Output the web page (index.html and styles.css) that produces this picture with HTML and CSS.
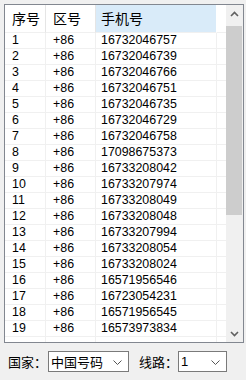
FILE: index.html
```html
<!DOCTYPE html>
<html lang="zh">
<head>
  <meta charset="UTF-8">
  <title>号码列表</title>
  <link rel="stylesheet" href="styles.css">
</head>
<body>
  <div class="list">
    <div class="grid">
      <div class="row head">
        <div class="cell">序号</div>
        <div class="cell">区号</div>
        <div class="cell sorted">手机号</div>
        <div class="cell"></div>
      </div>
      <div id="rows"></div>
      <div class="row">
        <div class="cell"></div>
        <div class="cell"></div>
        <div class="cell"></div>
        <div class="cell"></div>
      </div>
    </div>
    <div class="scrollbar">
      <div class="arrow">
        <svg width="9" height="6" viewBox="0 0 9 6"><path d="M1 5 L4.5 1.5 L8 5" fill="none" stroke="#606060" stroke-width="1.6"/></svg>
      </div>
      <div class="thumb"></div>
      <div class="track"></div>
      <div class="arrow">
        <svg width="9" height="6" viewBox="0 0 9 6"><path d="M1 1 L4.5 4.5 L8 1" fill="none" stroke="#606060" stroke-width="1.6"/></svg>
      </div>
    </div>
  </div>

  <div class="bar">
    <label>国家：</label>
    <div class="select wide">
      <span>中国号码</span>
      <svg width="9" height="5" viewBox="0 0 9 5"><path d="M0.5 0.5 L4.5 4.5 L8.5 0.5" fill="none" stroke="#555" stroke-width="1"/></svg>
    </div>
    <label class="second">线路：</label>
    <div class="select narrow">
      <span class="num">1</span>
      <svg width="9" height="5" viewBox="0 0 9 5"><path d="M0.5 0.5 L4.5 4.5 L8.5 0.5" fill="none" stroke="#555" stroke-width="1"/></svg>
    </div>
  </div>

  <script>
    const phones = [
      "16732046757", "16732046739", "16732046766", "16732046751", "16732046735",
      "16732046729", "16732046758", "17098675373", "16733208042", "16733207974",
      "16733208049", "16733208048", "16733207994", "16733208054", "16733208024",
      "16571956546", "16723054231", "16571956545", "16573973834"
    ];
    const box = document.getElementById("rows");
    phones.forEach((p, i) => {
      const row = document.createElement("div");
      row.className = "row";
      row.innerHTML =
        '<div class="cell">' + (i + 1) + '</div>' +
        '<div class="cell">+86</div>' +
        '<div class="cell">' + p + '</div>' +
        '<div class="cell"></div>';
      box.appendChild(row);
    });
  </script>
</body>
</html>
```

FILE: styles.css
```css
body {
  margin: 0;
  background-color: #f0f0f0;
  font-family: "Liberation Sans", "Noto Sans CJK SC", sans-serif;
  color: #000;
  width: 246px;
  height: 380px;
  overflow: hidden;
}
.list {
  margin: 4px 0 0 4px;
  width: 238px;
  height: 337px;
  border: 1px solid #828790;
  background: #fff;
  display: flex;
  overflow: hidden;
}
.grid {
  width: 221px;
  height: 337px;
  overflow: hidden;
}
.row {
  display: grid;
  grid-template-columns: 41px 50px 121px 9px;
  height: 16px;
}
.cell {
  border-right: 1px solid #f0f0f0;
  border-bottom: 1px solid #f0f0f0;
  padding-left: 7px;
  font-size: 12.4px;
  line-height: 15px;
  white-space: nowrap;
  overflow: hidden;
}
.cell:nth-child(3) {
  padding-left: 5px;
}
.cell:last-child {
  border-right: none;
  padding: 0;
}
.head {
  height: 28px;
}
.head .cell {
  font-family: "Noto Sans CJK SC", sans-serif;
  font-size: 14px;
  line-height: 27px;
  border-right-color: #e5e5e5;
}
.head .sorted {
  background: #d9ebf9;
  border-right-color: #fff;
}
.scrollbar {
  width: 17px;
  display: flex;
  flex-direction: column;
  background: #f0f0f0;
}
.arrow {
  height: 17px;
  display: flex;
  align-items: center;
  justify-content: center;
}
.thumb {
  margin: 4px 1px 0 0;
  height: 189px;
  background: #cdcdcd;
}
.track {
  flex: 1;
}
.bar {
  display: flex;
  align-items: center;
  margin-top: 8px;
  padding-left: 8px;
  font-family: "Noto Sans CJK SC", sans-serif;
  font-size: 13px;
}
.second {
  margin-left: 10px;
}
.select {
  height: 19px;
  border: 1px solid #7a7a7a;
  background: #fff;
  display: flex;
  align-items: center;
  justify-content: space-between;
  padding: 0 6px 0 2px;
  font-size: 13px;
}
.select svg {
  margin-top: 1px;
}
.wide {
  width: 71px;
  margin-left: 1px;
}
.narrow {
  width: 39px;
}
.num {
  font-family: "Liberation Sans", sans-serif;
}
```
